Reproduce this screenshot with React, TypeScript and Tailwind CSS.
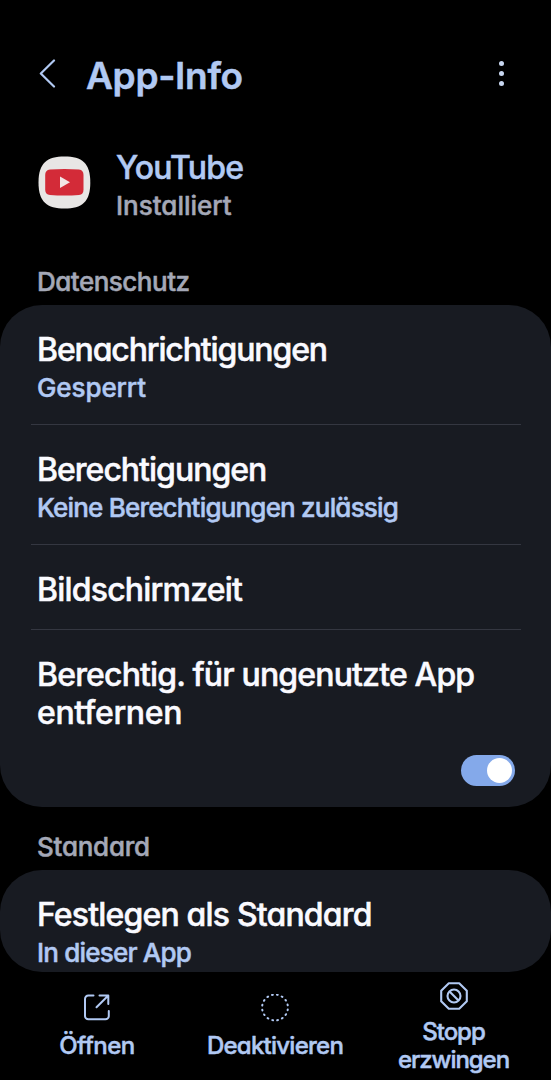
const OpenIcon = () => (
  <svg width="28" height="28" viewBox="0 0 28 28" fill="none" stroke="currentColor" strokeWidth="2" strokeLinecap="round" strokeLinejoin="round">
    <path d="M10.500 1.500H5.400a3.400 3.400 0 0 0-3.400 3.400v17a3.400 3.400 0 0 0 3.400 3.400h17a3.400 3.400 0 0 0 3.400-3.400V17" />
    <path d="M16.500 1.500h8.800v8.500M24.800 2L13.500 13.300" />
  </svg>
)

const DisableIcon = () => (
  <svg width="28" height="28" viewBox="0 0 28 28" fill="none" stroke="currentColor" strokeWidth="2" strokeLinecap="round">
    <circle cx="14" cy="13.500" r="12.900" pathLength="160" strokeDasharray="1.500 8.500" strokeDashoffset="-4" />
  </svg>
)

const StopIcon = () => (
  <svg width="28" height="28" viewBox="0 0 28 28" fill="none" stroke="currentColor" strokeWidth="2.100" strokeLinejoin="round">
    <path d="M8.800 1.200h10.400L26.800 8.800v10.400L19.200 26.800H8.800L1.200 19.200V8.800z" />
    <circle cx="14" cy="14" r="6.500" />
    <path d="M9.500 9.500l9 9" />
  </svg>
)

const privacyRows = [
  {
    title: "Benachrichtigungen",
    titleClass: "tracking-[-1.13px]",
    sub: "Gesperrt",
    subClass: "tracking-[-0.1px]",
    rowClass: "pb-[18px] border-b",
  },
  {
    title: "Berechtigungen",
    titleClass: "tracking-[-1px]",
    sub: "Keine Berechtigungen zulässig",
    subClass: "tracking-[-0.81px]",
    rowClass: "pb-[18px] border-b",
  },
  {
    title: "Bildschirmzeit",
    titleClass: "tracking-[-0.8px]",
    rowClass: "pb-[20px] border-b",
  },
]

const actions = [
  { label: "Öffnen", icon: <OpenIcon />, className: "w-[194px] pt-[22px]", labelClass: "mt-[10px] tracking-[-0.5px]" },
  { label: "Deaktivieren", icon: <DisableIcon />, className: "w-[162px] pt-[22px]", labelClass: "mt-[10px] tracking-[-0.75px]" },
  { label: "Stopp erzwingen", icon: <StopIcon />, className: "w-[195px] pt-[10px]", labelClass: "mt-[8px] w-[130px] tracking-[-1.05px]" },
]

const App = () => {
  return (
    <div className="flex h-[1080px] w-[551px] flex-col overflow-hidden bg-black font-['Inter',sans-serif] font-medium text-[#b1c9f3] [-webkit-text-stroke:0.5px_currentColor] [font-feature-settings:'cv11']">
      <header className="flex h-[146px] items-start pt-[51px]">
        <svg className="mt-2 ml-[38px]" width="18" height="30" viewBox="0 0 18 30" fill="none" stroke="currentColor" strokeWidth="2.200" strokeLinecap="round" strokeLinejoin="round">
          <path d="M16 1.500L2.800 14.500L16 27.500" />
        </svg>
        <h1 className="ml-[30px] text-[37px] leading-[50px] font-semibold tracking-[-0.3px] whitespace-nowrap">App-Info</h1>
        <div className="mt-[10px] mr-[47px] ml-auto flex flex-col gap-[5px]">
          <span className="size-[5px] rounded-full bg-[#c8d6f0]" />
          <span className="size-[5px] rounded-full bg-[#c8d6f0]" />
          <span className="size-[5px] rounded-full bg-[#c8d6f0]" />
        </div>
      </header>

      <section className="flex h-[118px] items-start pl-[38px]">
        <svg className="mt-[10px]" width="53" height="53" viewBox="0 0 53 53">
          <path d="M26.500 .5C44 .5 52.300 7 52.300 26.500S44 52.500 26.500 52.500S.5 46 .5 26.500S9 .5 26.500 .5z" fill="#e8e6e5" />
          <path d="M12 13.500Q26.500 12.500 41 13.500Q45.500 14 45.500 19V33.500Q45.500 38.500 41 39Q26.500 40 12 39Q7.200 38.500 7.200 33.500V19Q7.200 14 12 13.500z" fill="#d32b38" />
          <path d="M22 20.500L32 26.300L22 32z" fill="#f2e6e6" />
        </svg>
        <div className="pt-[2px] pl-[25px]">
          <h2 className="text-[32px] leading-[40px] tracking-[-0.8px]">YouTube</h2>
          <p className="text-[26px] leading-[36px] text-[#a4a8b7]">Installiert</p>
        </div>
      </section>

      <h3 className="h-[41px] pl-[37px] text-[26px] leading-[36px] tracking-[-0.5px] text-[#a4a8b7]">Datenschutz</h3>

      <section className="h-[502px] shrink-0 rounded-[42px] bg-[#181b22] pr-[30px] pl-[31px]">
        {privacyRows.map((row) => (
          <div key={row.title} className={`border-[#343741] pt-[26px] pl-[6px] ${row.rowClass}`}>
            <h4 className={`text-[32px] leading-[38px] text-[#fafaff] ${row.titleClass}`}>{row.title}</h4>
            {row.sub && <p className={`text-[26px] leading-[37px] ${row.subClass}`}>{row.sub}</p>}
          </div>
        ))}
        <div className="pt-[26px] pl-[6px]">
          <h4 className="text-[32px] leading-[37.5px] tracking-[-0.84px] whitespace-nowrap text-[#fafaff]">
            Berechtig. für ungenutzte App
            <br />
            <span className="tracking-[-0.35px]">entfernen</span>
          </h4>
        </div>
        <div className="mt-[24px] mr-[6px] ml-auto flex h-[31px] w-[54px] items-center justify-end rounded-full bg-[#84a9ea] pr-[3px]">
          <span className="size-[25px] rounded-full bg-white" />
        </div>
      </section>

      <h3 className="h-[63px] shrink-0 pt-[22px] pl-[37px] text-[26px] leading-[36px] tracking-[-0.25px] text-[#a4a8b7]">Standard</h3>

      <section className="h-[102px] shrink-0 overflow-hidden rounded-[42px] bg-[#181b22] pt-[26px] pl-[37px]">
        <h4 className="text-[32px] leading-[38px] tracking-[-0.83px] text-[#fafaff]">Festlegen als Standard</h4>
        <p className="text-[26px] leading-[37px] tracking-[-0.8px]">In dieser App</p>
      </section>

      <nav className="flex h-[108px] shrink-0">
        {actions.map((action) => (
          <button key={action.label} className={`flex flex-col items-center ${action.className}`}>
            {action.icon}
            <span className={`text-center text-[24px] leading-[28px] ${action.labelClass}`}>{action.label}</span>
          </button>
        ))}
      </nav>
    </div>
  )
}

export default App
